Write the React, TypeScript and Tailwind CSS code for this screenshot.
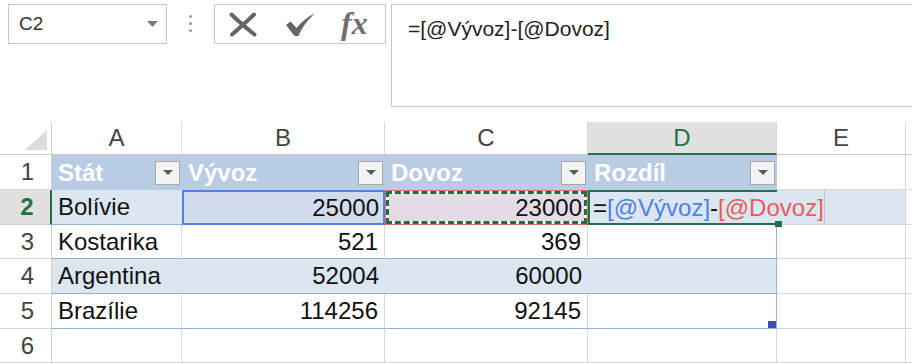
import React from "react";

const rows = [
  { n: 3, state: "Kostarika", vyvoz: "521", dovoz: "369", band: false },
  { n: 4, state: "Argentina", vyvoz: "52004", dovoz: "60000", band: true },
  { n: 5, state: "Brazílie", vyvoz: "114256", dovoz: "92145", band: false },
];

const FilterButton = () => (
  <div className="w-[25px] h-[24px] shrink-0 bg-[#f3f3f3] border border-[#a8a8a8] flex items-center justify-center">
    <svg width="10" height="5" viewBox="0 0 10 5">
      <path d="M0 0h10L5 5z" fill="#5a5a5a" />
    </svg>
  </div>
);

const HeaderCell = ({ label }: { label: string }) => (
  <div className="bg-[#b8cce4] flex items-center justify-between pl-[6px] pr-[2px] text-white font-bold">
    <span>{label}</span>
    <FilterButton />
  </div>
);

const FormulaBar = () => (
  <div className="flex items-start h-[122px] pt-[4px] pl-[8px]">
    {/* name box */}
    <div className="w-[159px] h-[40px] shrink-0 border border-[#c6c6c6] flex items-center justify-between pl-[10px] pr-[8px]">
      <span className="text-[19px] text-[#333]">C2</span>
      <svg width="11" height="6" viewBox="0 0 11 6">
        <path d="M0 0h11L5.5 6z" fill="#7a7a7a" />
      </svg>
    </div>

    <div className="ml-[22px] mt-[11px] flex flex-col gap-[4px]">
      <span className="w-[3px] h-[3px] rounded-full bg-[#9a9a9a]" />
      <span className="w-[3px] h-[3px] rounded-full bg-[#9a9a9a]" />
      <span className="w-[3px] h-[3px] rounded-full bg-[#9a9a9a]" />
    </div>

    {/* cancel / enter / insert function */}
    <div className="ml-[22px] w-[172px] h-[40px] shrink-0 border border-[#c6c6c6] flex items-center pl-[14px]">
      <svg width="28" height="25" viewBox="0 0 28 25">
        <path d="M2.5 2.5C9 9 18 16.5 25.5 22.5M25 2.5C18 9 10 16.5 3 22.5" stroke="#666" strokeWidth="4" strokeLinecap="round" fill="none" />
      </svg>
      <svg className="ml-[28px]" width="31" height="25" viewBox="0 0 31 25">
        <path d="M1 13L5.5 9.5L11.5 16C16.5 9.5 23 4.5 30 1.5C23 7.5 17.5 14.5 13.5 24L9.5 24Z" fill="#666" />
      </svg>
      <span className="ml-[25px] -mt-[2px] font-['Liberation_Serif',serif] italic font-bold text-[32px] leading-none text-[#707070]">
        fx
      </span>
    </div>

    {/* formula input */}
    <div className="ml-[5px] w-[540px] h-[103px] shrink-0 border border-[#c6c6c6] pl-[16px] pt-[8px] text-[21px] text-[#222]">
      =[@Vývoz]-[@Dovoz]
    </div>
  </div>
);

const Sheet = () => (
  <div className="grid grid-cols-[52px_130px_203px_203px_189px_129px_1fr] grid-rows-[33px_35px_35px_34px_35px_35px_34px] text-[24px]">
    {/* column headers */}
    <div className="flex items-end justify-end pr-[4px] pb-[4px] border-r border-b border-r-[#d0d0d0] border-b-[#c8c8c8]">
      <svg width="22" height="20" viewBox="0 0 22 20">
        <path d="M0 20L22 0V20Z" fill="#dcdcdc" />
      </svg>
    </div>
    <div className="flex items-center justify-center border-r border-b border-r-[#d8d8d8] border-b-[#c8c8c8] text-[#444]">A</div>
    <div className="flex items-center justify-center border-r border-b border-r-[#d8d8d8] border-b-[#c8c8c8] text-[#444]">B</div>
    <div className="flex items-center justify-center border-r border-b border-r-[#d8d8d8] border-b-[#c8c8c8] text-[#444]">C</div>
    <div className="flex items-center justify-center bg-[#e1e1e1] border-r border-b-2 border-r-[#d8d8d8] border-b-[#217346] text-[#217346]">D</div>
    <div className="flex items-center justify-center border-r border-b border-r-[#d8d8d8] border-b-[#c8c8c8] text-[#444]">E</div>
    <div className="border-b border-b-[#c8c8c8]" />

    {/* row 1 – table header */}
    <div className="flex items-center justify-center pl-[4px] border-r border-b border-r-[#d0d0d0] border-b-[#d8d8d8] text-[#444]">1</div>
    <HeaderCell label="Stát" />
    <HeaderCell label="Vývoz" />
    <HeaderCell label="Dovoz" />
    <HeaderCell label="Rozdíl" />
    <div className="border-r border-b border-r-[#d8d8d8] border-b-[#d8d8d8]" />
    <div className="border-b border-b-[#d8d8d8]" />

    {/* row 2 – editing */}
    <div className="flex items-center justify-center pl-[4px] bg-[#e1e1e1] border-r-2 border-b border-r-[#217346] border-b-[#d0d0d0] text-[#217346] font-bold">2</div>
    <div className="flex items-center pl-[6px] bg-[#dce6f1] border-b border-b-[#95b3d7]">Bolívie</div>
    <div className="flex items-center justify-end pr-[4px] bg-[#d2dcee] border-2 border-[#4f81e6]">25000</div>
    <div className="flex border border-[#e06c6c]">
      <div className="flex-1 flex border-[3px] border-dashed border-[#1f6d41] bg-white">
        <div className="flex-1 flex items-center justify-end pr-[2px] bg-[#e3dce5]">23000</div>
      </div>
    </div>
    <div className="relative z-10 flex items-center pl-[3px] whitespace-nowrap bg-[#dce6f1] border-t-2 border-b-2 border-l-2 border-t-[#217346] border-b-[#217346] border-l-[#217346]">
      <span>=</span>
      <span className="text-[#4f81e6]">[@Vývoz]</span>
      <span>-</span>
      <span className="text-[#e85c5c]">[@Dovoz]</span>
      <span className="absolute -right-[5px] -bottom-[4px] w-[7px] h-[6px] bg-[#217346]" />
    </div>
    <div className="flex bg-[#dce6f1] border-r border-b border-r-[#d8d8d8] border-b-[#d8d8d8]">
      <div className="w-[48px] h-full border-r border-r-[#c8c8c8]" />
    </div>
    <div className="border-b border-b-[#d8d8d8]" />

    {/* rows 3–5 */}
    {rows.map((r) => (
      <React.Fragment key={r.n}>
        <div className="flex items-center justify-center pl-[4px] border-r border-b border-r-[#d0d0d0] border-b-[#d8d8d8] text-[#444]">{r.n}</div>
        <div className={r.band ? "flex items-center pl-[6px] bg-[#dce6f1] border-b border-b-[#95b3d7]" : "flex items-center pl-[6px] border-r border-b border-r-[#d8d8d8] border-b-[#95b3d7]"}>
          {r.state}
        </div>
        <div className={r.band ? "flex items-center justify-end pr-[6px] bg-[#dce6f1] border-b border-b-[#95b3d7]" : "flex items-center justify-end pr-[6px] border-r border-b border-r-[#d8d8d8] border-b-[#95b3d7]"}>
          {r.vyvoz}
        </div>
        <div className={r.band ? "flex items-center justify-end pr-[6px] bg-[#dce6f1] border-b border-b-[#95b3d7]" : "flex items-center justify-end pr-[6px] border-r border-b border-r-[#d8d8d8] border-b-[#95b3d7]"}>
          {r.dovoz}
        </div>
        <div className={r.band ? "relative bg-[#dce6f1] border-r border-b border-r-[#95b3d7] border-b-[#95b3d7]" : "relative border-r border-b border-r-[#95b3d7] border-b-[#95b3d7]"}>
          {r.n === 5 && <span className="absolute right-0 bottom-0 w-[8px] h-[7px] bg-[#3d50b2]" />}
        </div>
        <div className="border-r border-b border-r-[#d8d8d8] border-b-[#d8d8d8]" />
        <div className="border-b border-b-[#d8d8d8]" />
      </React.Fragment>
    ))}

    {/* row 6 */}
    <div className="flex items-center justify-center pl-[4px] border-r border-b border-r-[#d0d0d0] border-b-[#d8d8d8] text-[#444]">6</div>
    <div className="border-r border-b border-r-[#d8d8d8] border-b-[#d8d8d8]" />
    <div className="border-r border-b border-r-[#d8d8d8] border-b-[#d8d8d8]" />
    <div className="border-r border-b border-r-[#d8d8d8] border-b-[#d8d8d8]" />
    <div className="border-r border-b border-r-[#d8d8d8] border-b-[#d8d8d8]" />
    <div className="border-r border-b border-r-[#d8d8d8] border-b-[#d8d8d8]" />
    <div className="border-b border-b-[#d8d8d8]" />
  </div>
);

export default function App() {
  return (
    <div className="w-[912px] h-[364px] overflow-hidden bg-white font-['Liberation_Sans',sans-serif] text-[#111]">
      <FormulaBar />
      <Sheet />
    </div>
  );
}
